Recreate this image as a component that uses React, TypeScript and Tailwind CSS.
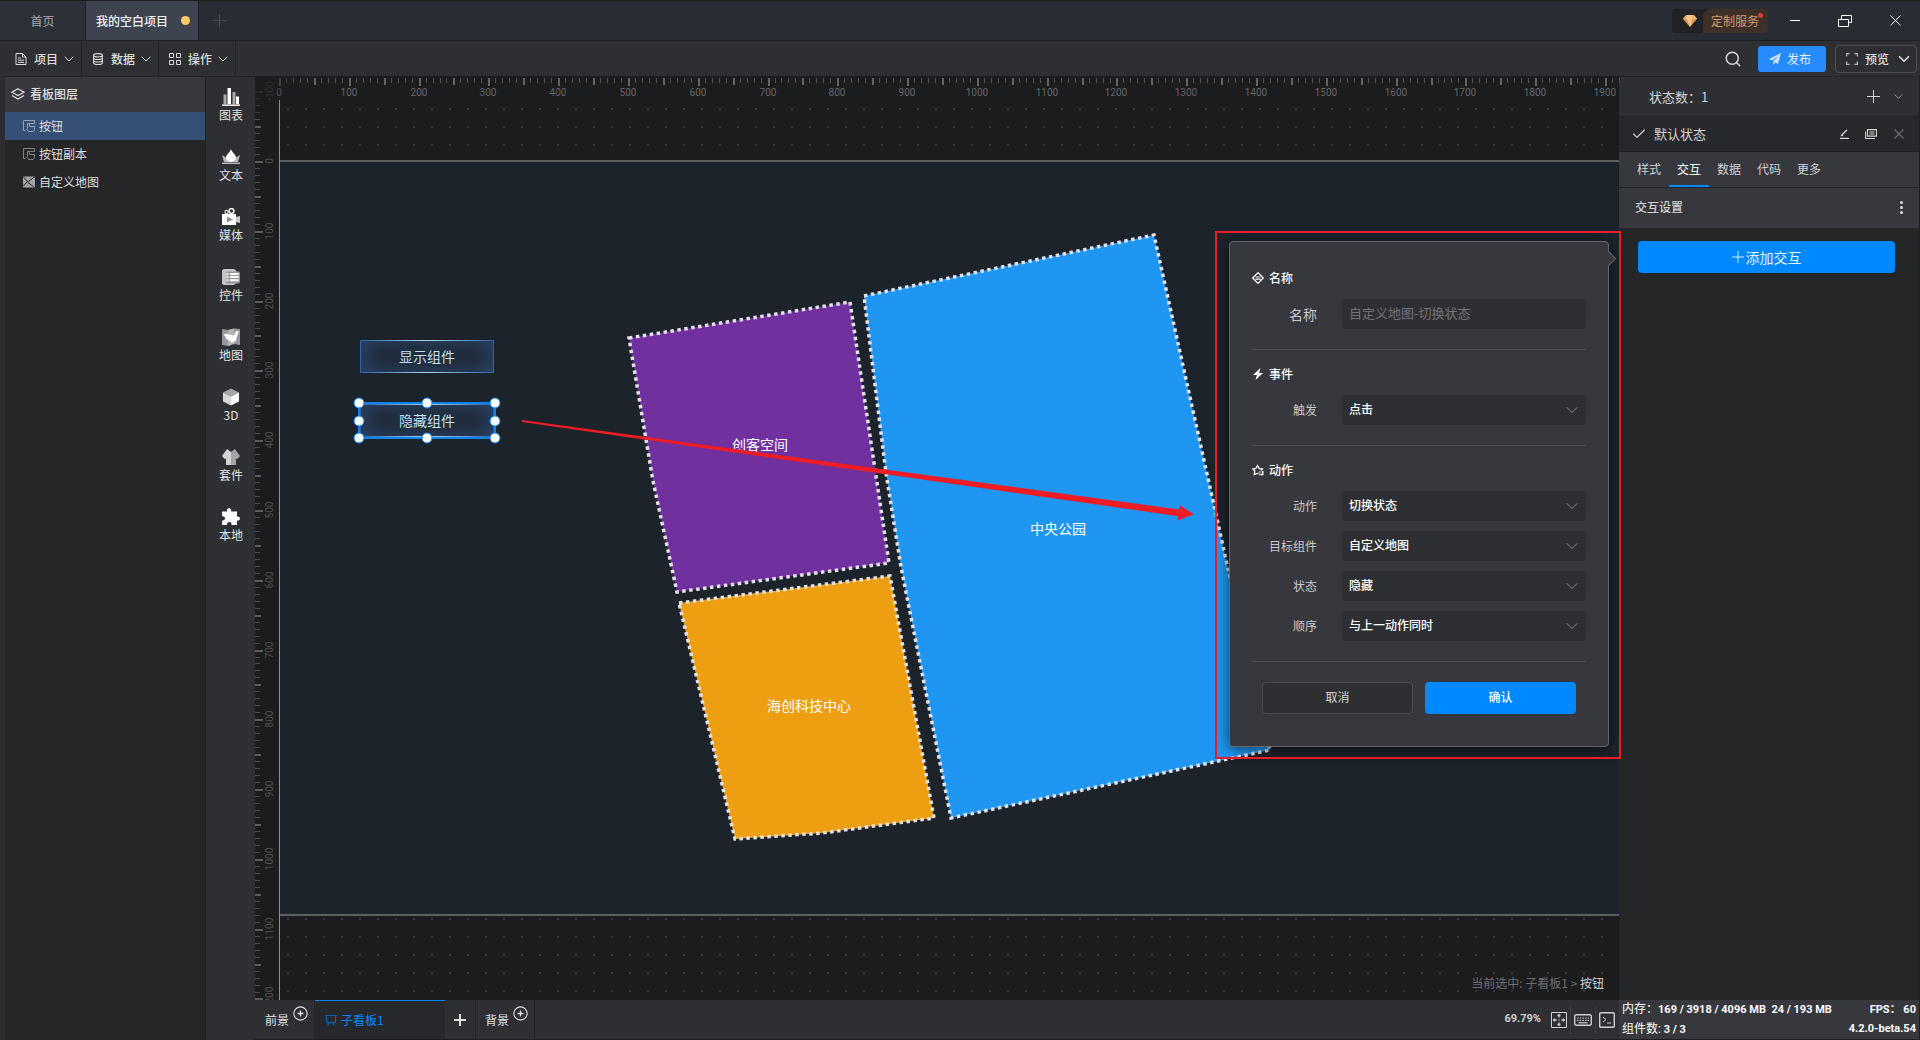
import React, { useEffect, useRef, useState } from "react";
import { ChevronDown, Search, Check, X } from "lucide-react";

type IconProps = { className?: string };

const DocIcon = ({ className }: IconProps) => (
  <svg viewBox="0 0 12 12" className={className} fill="none" stroke="currentColor">
    <path d="M1 .5h6.5L11 4v7.5H1zM7.5.5V4H11M3 5h3M3 7.2h6M3 9.4h6" />
  </svg>
);
const DbIcon = ({ className }: IconProps) => (
  <svg viewBox="0 0 12 12" className={className} fill="none" stroke="currentColor" strokeWidth="1.1">
    <ellipse cx="6" cy="2.3" rx="4.4" ry="1.7" />
    <path d="M1.6 2.3v7.4c0 2.3 8.8 2.3 8.8 0V2.3M1.6 4.8c0 2.3 8.8 2.3 8.8 0M1.6 7.3c0 2.3 8.8 2.3 8.8 0" />
  </svg>
);
const GridIcon = ({ className }: IconProps) => (
  <svg viewBox="0 0 12 12" className={className} fill="none" stroke="currentColor">
    <path d="M.5.5h4v4h-4zM7.5.5h4v4h-4zM.5 7.5h4v4h-4zM7.5 7.5h4v4h-4z" />
  </svg>
);
const LayersIcon = ({ className }: IconProps) => (
  <svg viewBox="0 0 14 12" className={className} fill="none" stroke="currentColor" strokeWidth="1.2">
    <path d="M7 .8l6 3.4-6 3.4-6-3.4zM1 7.4l6 3.6 6-3.6" />
  </svg>
);
const TouchIcon = ({ className }: IconProps) => (
  <svg viewBox="0 0 12 12" className={className} fill="none" stroke="currentColor">
    <path d="M2.500 10.500h-2v-10h11v3h-5M4.500 8.500v-5h2v3h5v3l-1.500 2H5.500l-2-2.500" />
  </svg>
);
const MapTileIcon = ({ className }: IconProps) => (
  <svg viewBox="0 0 12 12" className={className}>
    <path d="M0 .5h12v11H0z" fill="#a2a3a5" />
    <path d="M.5 1l4 4.500L0 10.500M12 .5L4.500 6l7 5.500" stroke="#252628" strokeWidth="1" fill="none" />
  </svg>
);
const PlusCircle = ({ className }: IconProps) => (
  <svg viewBox="0 0 14 14" className={className} fill="none" stroke="currentColor">
    <circle cx="7" cy="7" r="6.200" />
    <path d="M7 4.300v5.400M4.300 7h5.400" strokeWidth="1.2" />
  </svg>
);
const PlusMark = ({ className }: IconProps) => (
  <svg viewBox="0 0 13 13" className={className} stroke="currentColor">
    <path d="M6.500 0v13M0 6.500h13" />
  </svg>
);

const ChartIcon = () => (
  <svg viewBox="0 0 18 18" className="h-[18px] w-[18px]">
    <path d="M1.500 6.500h3V16h-3zM10.500 4h3v12h-3z" fill="#a9aaac" />
    <path d="M5.500 0h3.500v16H5.500zM14 8.500h3V16h-3z" fill="#fff" />
    <path d="M0 16.300h18V18H0z" fill="#e4e4e5" />
  </svg>
);
const TextIcon = () => (
  <svg viewBox="0 0 18 18" className="h-[18px] w-[18px]">
    <path d="M0 7l4 2.500L7 7v7H2zM18 7l-4 2.500L11 7v7h5z" fill="#b9babc" />
    <path d="M9 1c.5 3 5 5.500 5 8.500 0 2.500-2 4.500-5 4.500s-5-2-5-4.500C4 6.500 8.500 4 9 1z" fill="#fff" />
    <path d="M0 14.500h18V16H0z" fill="#b9babc" />
  </svg>
);
const MediaIcon = () => (
  <svg viewBox="0 0 18 18" className="h-[18px] w-[18px]">
    <circle cx="4.500" cy="4" r="1.600" fill="none" stroke="#d9dadb" strokeWidth="1.200" />
    <circle cx="9.500" cy="3" r="2.400" fill="none" stroke="#fff" strokeWidth="1.500" />
    <path d="M14 9l4-1v7l-4-1z" fill="#c9cacb" />
    <path d="M0 6h14v11H0z" fill="#fff" />
    <path d="M5 8.500l6 3-6 3z" fill="#8e8f92" />
  </svg>
);
const ControlIcon = () => (
  <svg viewBox="0 0 18 18" className="h-[18px] w-[18px]">
    <path d="M1.500 1H12l2.500 2v12L12 17H1.500L0 15.500v-13z" fill="#c4c5c7" />
    <path d="M4 3.500h13l1 1V14l-1 1.500H4z" fill="#97989b" />
    <path d="M4.500 5h2v2h-2zM4.500 8h2v2h-2zM4.500 11.200h2v2h-2zM8 5h8.500v2H8zM8 8h8.500v2H8zM8 11.200h8.500v2H8z" fill="#fff" />
  </svg>
);
const MapIcon = () => (
  <svg viewBox="0 0 18 18" className="h-[18px] w-[18px]">
    <path d="M0 1l6 1 6-1.500L18 1v16l-6-1-6 2-6-1z" fill="#97989b" />
    <path d="M6 2l6-1.500V16l-6 2z" fill="#b4b5b7" />
    <path d="M1.500 6.500l3-1 4 1.500 3.500.5L14 3l3 .5-2 4.500-1 5-4 1.500-2.500-2-3-1.500-1.500-3z" fill="#fff" />
  </svg>
);
const CubeIcon = () => (
  <svg viewBox="0 0 18 18" className="h-[18px] w-[18px]">
    <path d="M9 .5l8 4L9 8.500l-8-4z" fill="#a4a5a8" />
    <path d="M1 4.500l8 4v9l-8-4z" fill="#d6d7d8" />
    <path d="M17 4.500l-8 4v9l8-4z" fill="#fff" />
  </svg>
);
const ShirtIcon = () => (
  <svg viewBox="0 0 18 18" className="h-[18px] w-[18px]">
    <path d="M5 1l4 3v13H4v-6.500L2.500 11 0 8z" fill="#d2d3d4" />
    <path d="M13 1L9 4v13h5v-6.500l1.500.5L18 8z" fill="#a4a5a8" />
  </svg>
);
const PuzzleIcon = () => (
  <svg viewBox="0 0 18 18" className="h-[18px] w-[18px]">
    <path
      d="M0 3.500h5C4.500 1.500 5.500.3 7 .3s2.600 1.200 2.100 3.200H15v5c1.500-.4 3 .5 3 2s-1.500 2.500-3 2V17H9.500c.3-1.800-.7-3-2.200-3S4.800 15.200 5 17H0v-4.500c2 .3 3-.7 3-2.200S2 8 0 8.300z"
      fill="#fff"
    />
  </svg>
);

const tools = [
  { label: "图表", icon: <ChartIcon /> },
  { label: "文本", icon: <TextIcon /> },
  { label: "媒体", icon: <MediaIcon /> },
  { label: "控件", icon: <ControlIcon /> },
  { label: "地图", icon: <MapIcon /> },
  { label: "3D", icon: <CubeIcon /> },
  { label: "套件", icon: <ShirtIcon /> },
  { label: "本地", icon: <PuzzleIcon /> },
];

function TitleBar() {
  return (
    <header className="flex h-[41px] shrink-0 items-stretch border-y border-[#1d1e20] bg-[#272c35] text-xs">
      <button className="w-[86px] border-r border-[#1d1e20] bg-[#2b3039] text-[#a6a8ad]">首页</button>
      <button className="flex w-[113px] items-center justify-between border-r border-[#1d1e20] bg-[#3e4350] pr-2 pl-[10px] font-medium text-[#f2f2f3]">
        我的空白项目
        <span className="h-[9px] w-[9px] rounded-full bg-[#fdcb6a]" />
      </button>
      <button aria-label="新建" className="flex w-10 items-center justify-center text-[#464b55]">
        <PlusMark className="h-[13px] w-[13px]" />
      </button>
      <div className="flex-1" />
      <button className="relative mr-[2px] flex h-6 w-24 self-center overflow-hidden rounded bg-[#212226]">
        <span className="flex w-[31px] items-center justify-center pl-1">
          <svg viewBox="0 0 14 12" className="h-3 w-[14px]">
            <path d="M3 0h8l3 4-7 8-7-8z" fill="#dd9b5a" />
            <path d="M4 0h6l-1 4 -2 8-3-8z" fill="#f7c98e" />
            <path d="M0 4L3 0l1 4zM9 4l2-4 3 4z" fill="#f0b36f" />
          </svg>
        </span>
        <span className="flex-1 rounded-tl-lg bg-[#3e3029] pl-2 text-left leading-6 text-[#d39a6b]">定制服务</span>
        <span className="absolute top-1 right-[5px] h-[5px] w-[5px] rounded-full bg-[#d93a3a]" />
      </button>
      <button aria-label="最小化" className="flex w-[50px] items-center justify-center">
        <span className="h-px w-[10px] bg-white" />
      </button>
      <button aria-label="还原" className="flex w-[50px] items-center justify-center">
        <svg viewBox="0 0 14 12" className="h-3 w-[14px]" fill="none" stroke="#fff">
          <path d="M.5 4.500h10v7H.5zM3.500 4.500v-4h10v7h-3" />
        </svg>
      </button>
      <button aria-label="关闭" className="flex w-[50px] items-center justify-center">
        <svg viewBox="0 0 11 11" className="h-[11px] w-[11px]" stroke="#fff">
          <path d="M.5.5l10 10M10.500.5l-10 10" />
        </svg>
      </button>
    </header>
  );
}

function ToolBar() {
  const menus = [
    { label: "项目", icon: <DocIcon className="h-3 w-3" /> },
    { label: "数据", icon: <DbIcon className="h-3 w-3" /> },
    { label: "操作", icon: <GridIcon className="h-3 w-3" /> },
  ];
  return (
    <div className="flex h-[35px] shrink-0 items-stretch bg-[#2e2f33] pl-[5px] text-xs text-[#dcdcdd]">
      {menus.map((m) => (
        <button key={m.label} className="flex w-[77px] items-center border-r border-[#232427] pl-[10px] font-medium">
          {m.icon}
          <span className="ml-[7px]">{m.label}</span>
          <ChevronDown size={16} strokeWidth={1.500} className="ml-[3px]" />
        </button>
      ))}
      <div className="flex-1" />
      <button aria-label="搜索" className="mr-4 text-[#d6d6d7]">
        <Search size={18} strokeWidth={2} />
      </button>
      <button className="mr-[9px] flex h-[26px] w-[68px] items-center self-center rounded-[3px] bg-[#258bff] pl-[11px] text-[#e8f2ff]">
        <svg viewBox="0 0 12 12" className="h-3 w-3" fill="#c9e2ff">
          <path d="M12 0L0 6l3 1.500L9 3 4.300 8.300V12l2-2.500L9 11z" />
        </svg>
        <span className="ml-[6px]">发布</span>
      </button>
      <button className="mr-[3px] flex h-7 w-[82px] items-center self-center rounded border border-[#4c4d51] pl-[10px] font-medium">
        <svg viewBox="0 0 12 12" className="h-3 w-3" fill="none" stroke="#bcbcbe" strokeWidth="1.200">
          <path d="M.6 3.500V.6h2.900M8.500.6h2.900v2.900M11.400 8.500v2.900H8.500M3.500 11.400H.6V8.500" />
        </svg>
        <span className="ml-[7px]">预览</span>
        <ChevronDown size={18} strokeWidth={2.200} className="ml-[6px]" />
      </button>
    </div>
  );
}

function LayerPanel() {
  const rows = [
    { label: "按钮", icon: <TouchIcon className="h-3 w-3 text-[#98a3b5]" />, active: true },
    { label: "按钮副本", icon: <TouchIcon className="h-3 w-3 text-[#808184]" />, active: false },
    { label: "自定义地图", icon: <MapTileIcon className="h-3 w-3" />, active: false },
  ];
  return (
    <aside className="flex w-[206px] shrink-0 flex-col border-r border-[#222326] bg-[#252628] text-xs text-[#dedede]">
      <div className="flex h-full flex-col border-l-[5px] border-[#2b2c2f]">
        <h2 className="flex h-9 items-center border-t border-[#232427] bg-[#37383d] pb-px pl-[6px] font-medium">
          <LayersIcon className="mr-[5px] h-3 w-[14px]" />
          看板图层
        </h2>
        {rows.map((r) => (
          <button
            key={r.label}
            className={`flex h-7 items-center pb-px pl-[18px] ${r.active ? "bg-[#364f76]" : ""}`}
          >
            {r.icon}
            <span className="ml-1">{r.label}</span>
          </button>
        ))}
      </div>
    </aside>
  );
}

function ToolRail() {
  return (
    <nav className="flex w-[49px] shrink-0 flex-col items-center gap-6 border-t border-[#232427] bg-[#2e2f33] pt-[11px] pl-px text-xs text-[#e2e2e3]">
      {tools.map((t) => (
        <button key={t.label} className="flex flex-col items-center">
          {t.icon}
          <span className="leading-[18px]">{t.label}</span>
        </button>
      ))}
    </nav>
  );
}

const SCALE = 0.6979;

function useLength(axis: "width" | "height") {
  const ref = useRef<SVGSVGElement>(null);
  const [length, setLength] = useState(0);
  useEffect(() => {
    const el = ref.current;
    if (!el) return;
    const observer = new ResizeObserver(() => setLength(el.getBoundingClientRect()[axis]));
    observer.observe(el);
    setLength(el.getBoundingClientRect()[axis]);
    return () => observer.disconnect();
  }, [axis]);
  return [ref, length] as const;
}

function TopRuler() {
  const [ref, width] = useLength("width");
  const ticks = Math.floor(width / (10 * SCALE)) + 1;
  const labels = Math.floor((width - 12) / (100 * SCALE)) + 1;
  return (
    <svg ref={ref} className="block h-6 w-full overflow-visible" fontFamily="Roboto, sans-serif" fontSize="10">
      {Array.from({ length: Math.max(ticks, 0) }, (_, i) => {
        const x = Math.round(i * 10 * SCALE);
        const major = i % 5 === 0;
        return (
          <rect key={i} x={x} y={2} width={major ? 2 : 1} height={i % 10 === 0 ? 8 : major ? 7 : 5} fill={major ? "#626366" : "#505154"} />
        );
      })}
      {Array.from({ length: Math.max(labels, 0) }, (_, i) => (
        <text key={i} x={Math.round(i * 100 * SCALE)} y={20} textAnchor="middle" fill="#66676a">
          {i * 100}
        </text>
      ))}
    </svg>
  );
}

function LeftRuler() {
  const [ref, height] = useLength("height");
  const origin = 85;
  const ticks = Math.floor((height - origin) / (10 * SCALE)) + 11;
  const labels = Math.floor((height - origin) / (100 * SCALE)) + 2;
  return (
    <svg ref={ref} className="row-span-2 block h-full w-6 overflow-hidden" fontFamily="Roboto, sans-serif" fontSize="10">
      {Array.from({ length: Math.max(ticks, 0) }, (_, k) => {
        const i = k - 10;
        const y = origin + Math.round(i * 10 * SCALE);
        const major = i % 5 === 0;
        return (
          <rect key={i} x={0} y={y} width={i % 10 === 0 ? 8 : major ? 6 : 5} height={major ? 2 : 1} fill={major ? "#5b5c5f" : "#4b4c4f"} />
        );
      })}
      {Array.from({ length: Math.max(labels, 0) }, (_, k) => {
        const y = origin + Math.round((k - 1) * 100 * SCALE);
        return (
          <text key={k} transform={`translate(18 ${y}) rotate(-90)`} textAnchor="middle" fill="#515255">
            {(k - 1) * 100}
          </text>
        );
      })}
    </svg>
  );
}

function BoardButton({ label, className }: { label: string; className: string }) {
  return (
    <button
      className={`absolute h-[33px] w-[134px] border-x border-[#2f62ad] bg-[#1e2732] pb-px text-sm text-[#c0dff0] shadow-[inset_0_0_24px_rgba(58,102,172,0.6)] ${className}`}
    >
      <span className="absolute inset-x-0 top-0 h-px bg-linear-to-r from-[#2f62ad] via-[#a5d3e6] to-[#2f62ad]" />
      <span className="absolute inset-x-0 bottom-0 h-px bg-linear-to-r from-[#2f62ad] via-[#a5d3e6] to-[#2f62ad]" />
      {label}
    </button>
  );
}

function MapShape() {
  const outline = { stroke: "#e2e2e6", strokeWidth: 3.5, strokeDasharray: "3.5 3.5" };
  return (
    <svg viewBox="619 220 680 640" className="absolute top-[120px] left-[340px] h-[640px] w-[680px]">
      <polygon points="629,338 850,302 889,563 677,592 653,481" fill="#70309e" {...outline} />
      <polygon points="864,296 1154,235 1229,573 1270,750 951,818 901,567 886,473" fill="#1f96f2" {...outline} />
      <polygon points="679,603 890,576 934,818 822,833 735,839" fill="#ee9f11" {...outline} />
      <g fill="#fff" fontSize="14" textAnchor="middle">
        <text x="760" y="450">创客空间</text>
        <text x="1058" y="534">中央公园</text>
        <text x="809" y="711">海创科技中心</text>
      </g>
    </svg>
  );
}

const handles = [
  "left-0 top-0",
  "left-1/2 top-0",
  "left-full top-0",
  "left-0 top-1/2",
  "left-full top-1/2",
  "left-0 top-full",
  "left-1/2 top-full",
  "left-full top-full",
];

function Field({ id, label, children, big }: { id: string; label: string; children: React.ReactNode; big?: boolean }) {
  return (
    <div className="flex h-[30px] items-center">
      <label htmlFor={id} className={`mr-[25px] w-[65px] pb-px text-right text-[#c9c9cb] ${big ? "text-sm" : "text-xs"}`}>
        {label}
      </label>
      {children}
    </div>
  );
}

function Dropdown({ id, label, value }: { id: string; label: string; value: string }) {
  return (
    <Field id={id} label={label}>
      <div className="relative flex-1">
        <select
          id={id}
          className="block h-[30px] w-full appearance-none rounded bg-[#2e2f33] px-[7px] pb-[2px] text-xs font-medium text-white outline-none"
        >
          <option>{value}</option>
        </select>
        <ChevronDown size={20} strokeWidth={1.200} className="pointer-events-none absolute top-[5px] right-1 text-[#85868a]" />
      </div>
    </Field>
  );
}

function SectionTitle({ icon, text }: { icon: React.ReactNode; text: string }) {
  return (
    <h3 className="mb-[11px] flex h-5 items-center text-xs font-medium text-white">
      {icon}
      <span className="ml-[5px]">{text}</span>
    </h3>
  );
}

function InteractionPopup() {
  return (
    <form className="absolute top-[141px] right-[10px] w-[380px] rounded border border-[#64656a] bg-[#37383d] px-[22px] pt-[26px] pb-8 shadow-[0_2px_14px_rgba(0,0,0,0.6)]">
      <span className="absolute top-[11px] -right-[6px] h-[11px] w-[11px] rotate-45 border-t border-r border-[#64656a] bg-[#37383d]" />
      <section className="border-b border-[#4b4c50] pb-5">
        <SectionTitle
          text="名称"
          icon={
            <svg viewBox="0 0 12 12" className="h-3 w-3" fill="none" stroke="#fff" strokeWidth="1.200">
              <path d="M6 .7L11.300 6 6 11.300.7 6zM3.500 5h5M3.500 7.200h5" strokeLinejoin="round" />
            </svg>
          }
        />
        <Field id="name" label="名称" big>
          <input
            id="name"
            placeholder="自定义地图-切换状态"
            className="h-[30px] min-w-0 flex-1 rounded bg-[#2e2f33] px-[7px] pb-1 text-[13px] outline-none placeholder:text-[#717277]"
          />
        </Field>
      </section>
      <section className="border-b border-[#4b4c50] pt-[14px] pb-5">
        <SectionTitle
          text="事件"
          icon={
            <svg viewBox="0 0 12 12" className="h-3 w-3" fill="#fff">
              <path d="M8.500 0L1 7h4l-1.500 5L11 5H7z" />
            </svg>
          }
        />
        <Dropdown id="trigger" label="触发" value="点击" />
      </section>
      <section className="border-b border-[#4b4c50] pt-[14px] pb-5">
        <SectionTitle
          text="动作"
          icon={
            <svg viewBox="0 0 12 12" className="h-3 w-3" fill="none" stroke="#fff" strokeWidth="1.300">
              <path d="M6.500 9.200L2.300 10.500l.5-3.500L.8 5l3-.5L5.500 1.500l1.700 3 3.200.5-1.500 1.500" />
              <path d="M7.200 8h1.300M7.200 10.500h4.300M10 8h1.500M10.700 7v3.500" strokeWidth="1.400" />
            </svg>
          }
        />
        <div className="flex flex-col gap-[10px]">
          <Dropdown id="action" label="动作" value="切换状态" />
          <Dropdown id="target" label="目标组件" value="自定义地图" />
          <Dropdown id="state" label="状态" value="隐藏" />
          <Dropdown id="order" label="顺序" value="与上一动作同时" />
        </div>
      </section>
      <div className="grid grid-cols-2 gap-3 px-[10px] pt-5 text-xs">
        <button type="button" className="h-8 rounded border border-[#4b4c50] bg-[#2e2f33] pb-[2px] text-[#d6d6d8]">
          取消
        </button>
        <button type="button" className="h-8 rounded bg-[#0089ff] pb-[2px] font-medium text-white">
          确认
        </button>
      </div>
    </form>
  );
}

function Stage() {
  return (
    <div className="relative z-10 grid min-h-0 flex-1 grid-cols-[24px_minmax(0,1fr)] grid-rows-[24px_minmax(0,1fr)] bg-[#1b1c1e]">
      <LeftRuler />
      <TopRuler />
      <div className="relative bg-[radial-gradient(#35363a_1px,transparent_1px)] bg-[size:18px_18px]">
        <div className="absolute inset-x-0 top-[60px] h-[756px] border-y-2 border-[#5c5f62] bg-[#1c232b]" />
        <div className="absolute inset-y-0 left-0 w-px bg-[#8d8e90]" />
        <div className="pointer-events-none absolute -top-6 -left-6 h-10 w-10 bg-linear-to-br from-[#1b1c1e] from-15% to-transparent to-65%" />
        <MapShape />
        <BoardButton label="显示组件" className="top-[240px] left-[81px]" />
        <BoardButton label="隐藏组件" className="top-[304px] left-[81px]" />
        <div className="absolute top-[302px] left-[79px] h-[37px] w-[138px] border-2 border-[#0f82ec]">
          <div className="absolute inset-[-1px]">
            {handles.map((h) => (
              <span
                key={h}
                className={`absolute h-[11px] w-[11px] -translate-x-1/2 -translate-y-1/2 rounded-full border-[1.5px] border-[#0d84f5] bg-white ${h}`}
              />
            ))}
          </div>
        </div>
        <p className="absolute right-[15px] bottom-[5px] text-xs leading-6 text-[#6d6e71]">
          当前选中: 子看板1 &gt; <span className="text-[#cfcfd0]">按钮</span>
        </p>
        <InteractionPopup />
        <div className="pointer-events-none absolute top-[131px] -right-[2px] h-[528px] w-[406px] border-2 border-[#ee1c24]" />
        <svg viewBox="520 410 680 120" className="pointer-events-none absolute top-[310px] left-[241px] h-[120px] w-[680px]">
          <path d="M522 420L1179 509.500 1180 505.500 1194 514.300 1177.500 520.400 1178.500 516.200 522 422z" fill="#ee1c24" />
        </svg>
      </div>
    </div>
  );
}

function BottomBar() {
  return (
    <footer className="flex h-10 shrink-0 items-stretch border-b border-[#1d1e20] bg-[#2e2f33] text-xs text-[#e2e2e3]">
      <button className="flex w-[60px] items-center border-r border-[#232427] pl-[10px]">
        前景
        <PlusCircle className="mb-3 ml-1 h-[15px] w-[15px]" />
      </button>
      <button className="flex w-[130px] items-center border-t border-[#0089ff] bg-[#27282b] pl-[10px] text-[#0089ff]">
        <svg viewBox="0 0 12 12" className="mr-1 h-3 w-3" fill="none" stroke="#0c63ae" strokeWidth="1.200">
          <path d="M0 1.500h12M1.500 1.500v7h9v-7M4 8.500L3 11.500M8 8.500l1 3" />
        </svg>
        子看板1
      </button>
      <button aria-label="添加看板" className="flex w-[31px] items-center justify-center border-r border-[#232427]">
        <svg viewBox="0 0 12 12" className="h-3 w-3" stroke="currentColor" strokeWidth="2">
          <path d="M6 0v12M0 6h12" />
        </svg>
      </button>
      <button className="flex w-[59px] items-center border-r border-[#232427] pl-[9px]">
        背景
        <PlusCircle className="mb-3 ml-1 h-[15px] w-[15px]" />
      </button>
      <div className="flex-1" />
      <div className="flex items-center pr-1 text-[#cfcfd0]">
        <span className="mr-[10px] font-['Roboto'] text-[11px] font-bold">69.79%</span>
        <button aria-label="适应画布">
          <svg viewBox="0 0 16 16" className="h-4 w-4" fill="none" stroke="currentColor">
            <path d="M.5.5h15v15H.5z" />
            <path d="M8 2v3.500M8 10.500V14M2 8h3.500M10.500 8H14M6.500 3.500h3M6.500 12.500h3M3.500 6.500v3M12.500 6.500v3" strokeWidth="1.300" />
            <path d="M7.300 8h1.400" />
          </svg>
        </button>
        <span className="mx-[3px] h-7 w-px bg-[#3c3d41]" />
        <button aria-label="快捷键">
          <svg viewBox="0 0 18 12" className="h-3 w-[18px]" fill="none" stroke="currentColor">
            <rect x=".7" y=".7" width="16.600" height="10.600" rx="1.500" strokeWidth="1.400" />
            <path d="M3 4h12M3 6.300h12" strokeDasharray="1.500 1.200" strokeWidth="1.200" />
            <path d="M4.500 8.800h9" strokeWidth="1.200" />
          </svg>
        </button>
        <span className="mx-[3px] h-7 w-px bg-[#3c3d41]" />
        <button aria-label="控制台">
          <svg viewBox="0 0 16 16" className="h-4 w-4" fill="none" stroke="currentColor">
            <rect x=".7" y=".7" width="14.600" height="14.600" rx="1" strokeWidth="1.400" />
            <path d="M4 5l3 2.500L4 10M8 11h4" />
          </svg>
        </button>
      </div>
    </footer>
  );
}

function Inspector() {
  const tabs = ["样式", "交互", "数据", "代码", "更多"];
  return (
    <aside className="flex w-[301px] shrink-0 flex-col border-r border-[#1d1e20] bg-[#252628] text-[#d2d2d3]">
      <div className="flex h-[41px] items-center border-y border-[#232427] bg-[#2e2f33] pr-[13px] pl-[30px] text-[13px]">
        <span className="flex-1">状态数：1</span>
        <button aria-label="添加状态" className="mr-[11px]">
          <PlusMark className="h-[13px] w-[13px]" />
        </button>
        <ChevronDown size={15} strokeWidth={1.500} className="text-[#97989b]" />
      </div>
      <div className="flex h-[35px] items-center border-b border-[#1f2022] bg-[#27282b] pr-[12px] pl-3 text-[13px]">
        <Check size={16} strokeWidth={1.800} />
        <span className="ml-[7px] flex-1">默认状态</span>
        <button aria-label="重命名" className="mr-4">
          <svg viewBox="0 0 10 10" className="h-[10px] w-[10px]" fill="none" stroke="currentColor" strokeWidth="1.300">
            <path d="M1 9.300h9M2 7L8 .8M2 6.700l2-.3" />
          </svg>
        </button>
        <button aria-label="复制" className="mr-[14px]">
          <svg viewBox="0 0 12 10" className="h-[10px] w-3" fill="none" stroke="currentColor" strokeWidth="1.100">
            <path d="M2.500.6h9v6.500h-9zM.6 2.500v7H10M4.500 3h5M4.500 5h5" />
          </svg>
        </button>
        <X size={16} strokeWidth={1.800} className="text-[#6b6c6f]" />
      </div>
      <div className="flex h-9 border-b border-[#232427] bg-[#37383d] pl-[10px] text-xs">
        {tabs.map((t) => (
          <button
            key={t}
            className={`w-10 border-b-2 ${t === "交互" ? "border-[#0089ff] text-white" : "border-transparent"}`}
          >
            {t}
          </button>
        ))}
      </div>
      <div className="flex h-10 items-center justify-between bg-[#37383d] px-4 pb-[2px] text-xs font-medium">
        交互设置
        <button aria-label="更多操作" className="flex flex-col gap-[2px]">
          <span className="h-[3px] w-[3px] rounded-full bg-[#dcdcdd]" />
          <span className="h-[3px] w-[3px] rounded-full bg-[#dcdcdd]" />
          <span className="h-[3px] w-[3px] rounded-full bg-[#dcdcdd]" />
        </button>
      </div>
      <button className="mt-[13px] mr-6 ml-[19px] flex h-8 items-center justify-center gap-[2px] rounded bg-[#0089ff] text-sm text-[#e6f3ff]">
        <PlusMark className="h-3 w-3" />
        添加交互
      </button>
      <div className="flex-1" />
      <div className="flex h-10 flex-col justify-center border-b border-[#1d1e20] bg-[#37383d] px-[3px] font-['Roboto','Noto_Sans_CJK_SC',sans-serif] text-[11px] text-white">
        <div className="flex h-5 items-center justify-between whitespace-pre">
          <span>
            <span className="text-xs">内存：</span>
            <b>169 / 3918 / 4096 MB  24 / 193 MB</b>
          </span>
          <b>FPS： 60</b>
        </div>
        <div className="flex h-5 items-center justify-between whitespace-pre">
          <span>
            <span className="text-xs">组件数:</span> <b>3 / 3</b>
          </span>
          <b>4.2.0-beta.54</b>
        </div>
      </div>
    </aside>
  );
}

export default function App() {
  return (
    <div className="flex h-screen flex-col overflow-hidden bg-[#252628] font-['Noto_Sans_CJK_SC',sans-serif]">
      <TitleBar />
      <ToolBar />
      <div className="flex min-h-0 flex-1">
        <LayerPanel />
        <ToolRail />
        <main className="flex min-w-0 flex-1 flex-col">
          <Stage />
          <BottomBar />
        </main>
        <Inspector />
      </div>
    </div>
  );
}
